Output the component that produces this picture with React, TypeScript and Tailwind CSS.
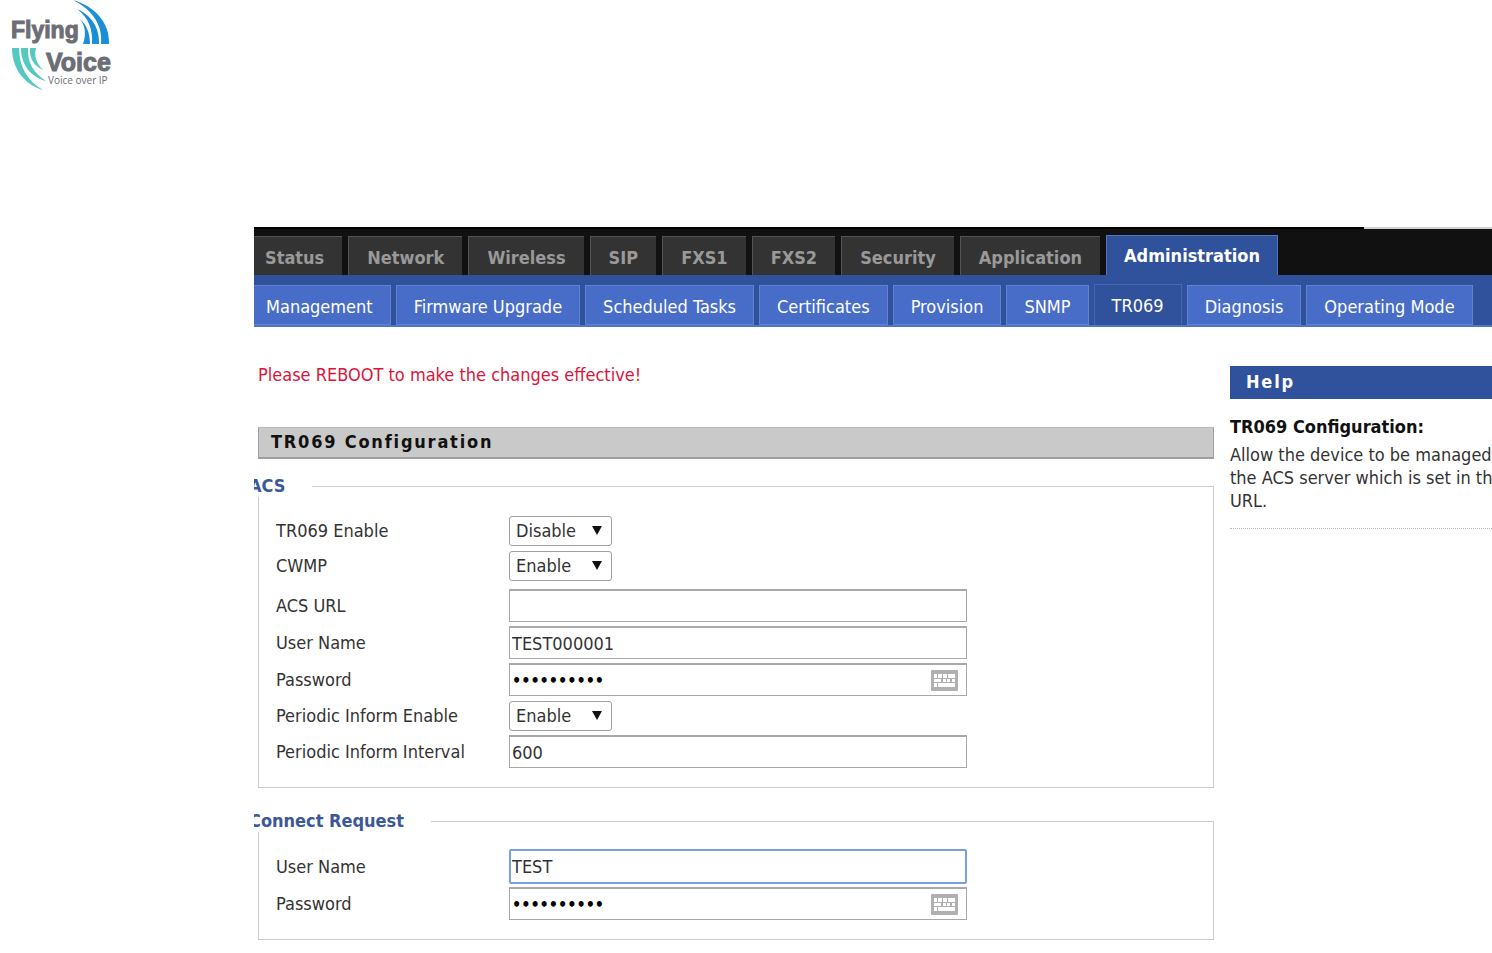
import { useState } from 'react';
import type { ReactNode } from 'react';

const MAIN_TABS = [
  'Status',
  'Network',
  'Wireless',
  'SIP',
  'FXS1',
  'FXS2',
  'Security',
  'Application',
  'Administration',
];

const SUB_TABS = [
  'Management',
  'Firmware Upgrade',
  'Scheduled Tasks',
  'Certificates',
  'Provision',
  'SNMP',
  'TR069',
  'Diagnosis',
  'Operating Mode',
];

function Logo() {
  return (
    <svg width="120" height="92" viewBox="0 0 120 92" role="img" aria-label="Flying Voice">
      <g fill="#1b8fd6">
        <path d="M73 0C94 6 110 22 109 44H101C103 26 93 10 73 0Z" />
        <path d="M77 9C91 15 100 28 99 44H92C93 30 89 18 77 9Z" />
        <path d="M80 19C87 25 90 34 90 44H83C86 35 86 27 80 19Z" />
      </g>
      <g fill="#56c8c2">
        <path d="M12 48H19C19 66 27 81 43 90C25 85 12 69 12 48Z" />
        <path d="M21 48H28C27 61 33 73 46 81C31 77 21 65 21 48Z" />
        <path d="M30 48H36C34 56 36 63 43 70C34 66 29 58 30 48Z" />
      </g>
      <g fill="#6c6e76" stroke="#6c6e76" strokeWidth="1" fontWeight="700" fontFamily="'Liberation Sans', sans-serif">
        <text x="11" y="38" fontSize="23">Flying</text>
        <text x="46" y="71" fontSize="25">Voice</text>
      </g>
      <text x="48" y="84" fontSize="10" fill="#6c6e76" fontFamily="'Open Sans', sans-serif">Voice over IP</text>
    </svg>
  );
}

function KeyboardIcon() {
  return (
    <svg width="27" height="21" viewBox="0 0 27 21" aria-hidden="true">
      <rect width="27" height="21" rx="1" fill="#b0b0b0" />
      <g fill="#fff">
        <path d="M3 4h3v4H3zM7 4h4v4H7zM12 4h4v4h-4zM17 4h7v4h-7z" />
        <path d="M3 9h7v3H3zM12 9h3v3h-3zM16 9h3v3h-3zM21 9h3v3h-3z" />
        <path d="M3 13h3v4H3zM7 13h17v4H7z" />
      </g>
    </svg>
  );
}

function Row({ id, label, tall, children }: { id: string; label: string; tall?: boolean; children: ReactNode }) {
  return (
    <div className={tall ? 'flex h-[37px] items-center' : 'flex h-[35px] items-center'}>
      <label htmlFor={id} className="w-[233px] shrink-0">
        {label}
      </label>
      {children}
    </div>
  );
}

function SelectRow({ id, label, initial }: { id: string; label: string; initial: string }) {
  const [value, setValue] = useState(initial);
  return (
    <Row id={id} label={label}>
      <div className="relative">
        <select
          id={id}
          value={value}
          onChange={(e) => setValue(e.target.value)}
          className="block h-[30px] w-[103px] appearance-none rounded-[3px] border border-[#a0a0a0] bg-white pl-1.5 outline-none"
        >
          <option>Enable</option>
          <option>Disable</option>
        </select>
        <svg className="pointer-events-none absolute right-2.5 top-2.5" width="10" height="9" viewBox="0 0 10 9" aria-hidden="true">
          <path d="M0 0H10L5 9Z" fill="#111" />
        </svg>
      </div>
    </Row>
  );
}

type TextRowProps = { id: string; label: string; initial: string; secret?: boolean; active?: boolean };

function TextRow({ id, label, initial, secret, active }: TextRowProps) {
  const [value, setValue] = useState(initial);
  const frame = active
    ? 'h-[35px] rounded-[2px] border-2 border-[#7b9fe0] pl-px'
    : 'h-[33px] border border-t-2 border-[#a9a9a9] pl-0.5';
  return (
    <Row id={id} label={label} tall>
      <div className="relative w-[458px]">
        <input
          id={id}
          type={secret ? 'password' : 'text'}
          value={value}
          onChange={(e) => setValue(e.target.value)}
          className={`block w-full bg-white outline-none ${frame} ${secret ? 'text-base font-bold text-black' : ''}`}
        />
        {secret && (
          <span className="absolute right-[9px] top-[7px]">
            <KeyboardIcon />
          </span>
        )}
      </div>
    </Row>
  );
}

function Group({ title, children }: { title: string; children: ReactNode }) {
  return (
    <fieldset className="border border-[#cccccc] pb-[17px] pl-[17px]">
      <legend className="-ml-[27px] bg-white pr-[27px] font-bold leading-[22px] text-[#3b5998]">{title}</legend>
      <div className="pt-4">{children}</div>
    </fieldset>
  );
}

export default function App() {
  return (
    <div className="overflow-hidden bg-white pb-3.5 font-['DejaVu_Sans_Condensed','Noto_Sans',sans-serif] text-lg leading-[23px] text-[#333]">
      <header className="h-[227px]">
        <Logo />
      </header>

      <div className="ml-[254px] overflow-hidden">
        {/* Main tabs */}
        <div className="bg-[#111111]">
          <div className="flex h-0.5 justify-end bg-black">
            <div className="w-32 bg-[#d0d0d0]" />
          </div>
          <nav className="-ml-2 flex h-[46px] items-end gap-1.5 font-bold">
            {MAIN_TABS.map((tab) => (
              <a
                key={tab}
                href="#"
                className={
                  tab === 'Administration'
                    ? 'flex h-10 items-center whitespace-nowrap border-x border-t border-[#5077bd] bg-[#30519c] px-[17px] text-white'
                    : 'flex h-[39px] items-center whitespace-nowrap border-l border-t border-[#555] bg-[#333] px-[18px] pt-0.5 text-[#999]'
                }
              >
                {tab}
              </a>
            ))}
          </nav>
        </div>

        {/* Sub tabs */}
        <nav className="-ml-1.5 flex h-[52px] items-end gap-[5px] border-b-2 border-[#5077bd] bg-[#30519c] text-white">
          {SUB_TABS.map((tab) => (
            <a
              key={tab}
              href="#"
              className={
                tab === 'TR069'
                  ? 'flex h-[41px] items-center whitespace-nowrap border-x border-t border-[#4467b5] px-[17px]'
                  : 'flex h-10 items-center whitespace-nowrap border border-[#5f82d3] bg-[#486dc8] px-[17px] pt-0.5'
              }
            >
              {tab}
            </a>
          ))}
        </nav>

        <div className="flex gap-4 pl-1">
          <main className="min-w-0 flex-1 pt-9">
            <p className="text-[#dc143c]">Please REBOOT to make the changes effective!</p>

            <h1 className="mt-[41px] h-8 border border-b-2 border-[#a0a0a0] border-t-[#bbb] bg-[#c9c9c9] pl-3 font-bold leading-7 tracking-widest text-[#111]">
              TR069 Configuration
            </h1>

            <form className="mt-4">
              <Group title="ACS">
                <SelectRow id="tr069-enable" label="TR069 Enable" initial="Disable" />
                <SelectRow id="cwmp" label="CWMP" initial="Enable" />
                <div className="pt-1">
                  <TextRow id="acs-url" label="ACS URL" initial="" />
                </div>
                <TextRow id="acs-user" label="User Name" initial="TEST000001" />
                <TextRow id="acs-password" label="Password" initial="admin12345" secret />
                <SelectRow id="inform-enable" label="Periodic Inform Enable" initial="Enable" />
                <TextRow id="inform-interval" label="Periodic Inform Interval" initial="600" />
              </Group>

              <div className="mt-[22px]">
                <Group title="Connect Request">
                  <TextRow id="request-user" label="User Name" initial="TEST" active />
                  <TextRow id="request-password" label="Password" initial="admin12345" secret />
                </Group>
              </div>
            </form>
          </main>

          <aside className="w-[262px] shrink-0 whitespace-nowrap pt-[39px]">
            <h2 className="h-[33px] bg-[#30519c] pl-4 font-bold leading-8 tracking-widest text-white">Help</h2>
            <h3 className="mt-4 font-bold text-[#111]">TR069 Configuration:</h3>
            <p className="mt-[5px]">
              Allow the device to be managed
              <br />
              the ACS server which is set in the
              <br />
              URL.
            </p>
            <div className="mt-4 border-t border-dotted border-[#bbb]" />
          </aside>
        </div>
      </div>
    </div>
  );
}
